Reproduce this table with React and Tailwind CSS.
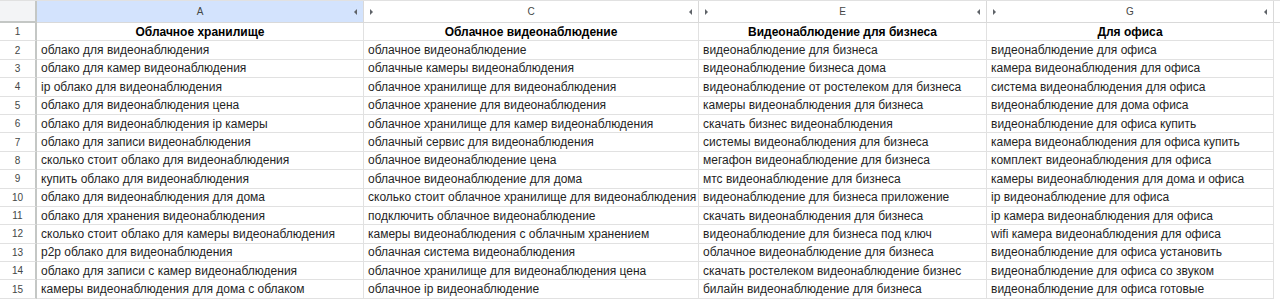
const headers = ["Облачное хранилище", "Облачное видеонаблюдение", "Видеонаблюдение для бизнеса", "Для офиса"];

const rows = [
  ["облако для видеонаблюдения", "облачное видеонаблюдение", "видеонаблюдение для бизнеса", "видеонаблюдение для офиса"],
  ["облако для камер видеонаблюдения", "облачные камеры видеонаблюдения", "видеонаблюдение бизнеса дома", "камера видеонаблюдения для офиса"],
  ["ip облако для видеонаблюдения", "облачное хранилище для видеонаблюдения", "видеонаблюдение от ростелеком для бизнеса", "система видеонаблюдения для офиса"],
  ["облако для видеонаблюдения цена", "облачное хранение для видеонаблюдения", "камеры видеонаблюдения для бизнеса", "видеонаблюдение для дома офиса"],
  ["облако для видеонаблюдения ip камеры", "облачное хранилище для камер видеонаблюдения", "скачать бизнес видеонаблюдения", "видеонаблюдение для офиса купить"],
  ["облако для записи видеонаблюдения", "облачный сервис для видеонаблюдения", "системы видеонаблюдения для бизнеса", "камера видеонаблюдения для офиса купить"],
  ["сколько стоит облако для видеонаблюдения", "облачное видеонаблюдение цена", "мегафон видеонаблюдение для бизнеса", "комплект видеонаблюдения для офиса"],
  ["купить облако для видеонаблюдения", "облачное видеонаблюдение для дома", "мтс видеонаблюдение для бизнеса", "камеры видеонаблюдения для дома и офиса"],
  ["облако для видеонаблюдения для дома", "сколько стоит облачное хранилище для видеонаблюдения", "видеонаблюдение для бизнеса приложение", "ip видеонаблюдение для офиса"],
  ["облако для хранения видеонаблюдения", "подключить облачное видеонаблюдение", "скачать видеонаблюдения для бизнеса", "ip камера видеонаблюдения для офиса"],
  ["сколько стоит облако для камеры видеонаблюдения", "камеры видеонаблюдения с облачным хранением", "видеонаблюдение для бизнеса под ключ", "wifi камера видеонаблюдения для офиса"],
  ["p2p облако для видеонаблюдения", "облачная система видеонаблюдения", "облачное видеонаблюдение для бизнеса", "видеонаблюдение для офиса установить"],
  ["облако для записи с камер видеонаблюдения", "облачное хранилище для видеонаблюдения цена", "скачать ростелеком видеонаблюдение бизнес", "видеонаблюдение для офиса со звуком"],
  ["камеры видеонаблюдения для дома с облаком", "облачное ip видеонаблюдение", "билайн видеонаблюдение для бизнеса", "видеонаблюдение для офиса готовые"],
];

const cols = ["A", "C", "E", "G"];
const widths = ["w-[327px]", "w-[335px]", "w-[288px]", "w-[287px]"];

function ArrowLeft() {
  return <span className="w-0 h-0 border-y-[3px] border-y-transparent border-r-[3px] border-r-[#5f6368]" />;
}

function ArrowRight() {
  return <span className="w-0 h-0 border-y-[3px] border-y-transparent border-l-[3px] border-l-[#5f6368]" />;
}

export default function App() {
  return (
    <div className="w-[1280px] h-[300px] overflow-hidden bg-white text-[12px] text-[#1f1f1f]" style={{ fontFamily: '"Liberation Sans", Arial, sans-serif' }}>
      {/* column headers */}
      <div className="flex h-[23px] border-t border-[#e1e1e1]">
        <div className="w-[37px] shrink-0 bg-[#f3f4f6] border-r-2 border-b-2 border-[#c4c7c5]" />
        {cols.map((c, i) => (
          <div
            key={c}
            className={`${widths[i]} shrink-0 relative flex items-center justify-center text-[10px] text-[#444746] border-r border-b border-[#d9d9d9] ${i === 0 ? "bg-[#d3e3fd]" : "bg-white"}`}
          >
            {c}
            {i > 0 && (
              <span className="absolute left-[6px] top-1/2 -translate-y-1/2 flex">
                <ArrowRight />
              </span>
            )}
            <span className="absolute right-[6px] top-1/2 -translate-y-1/2 flex">
              <ArrowLeft />
            </span>
          </div>
        ))}
        <div className="flex-1 border-b border-[#d9d9d9]" />
      </div>

      {/* header row */}
      <div className="flex h-[18.4px]">
        <div className="w-[37px] shrink-0 flex items-center justify-center text-[10px] text-[#444746] border-r-2 border-b border-r-[#c4c7c5] border-b-[#e1e1e1]">1</div>
        {headers.map((h, i) => (
          <div key={i} className={`${widths[i]} shrink-0 flex items-center justify-center font-bold border-r border-b border-[#e1e1e1] text-black`}>
            {h}
          </div>
        ))}
        <div className="flex-1" />
      </div>

      {rows.map((r, ri) => (
        <div key={ri} className="flex h-[18.4px]">
          <div className="w-[37px] shrink-0 flex items-center justify-center text-[10px] text-[#444746] border-r-2 border-b border-r-[#c4c7c5] border-b-[#e1e1e1]">
            {ri + 2}
          </div>
          {r.map((t, i) => (
            <div key={i} className={`${widths[i]} shrink-0 flex items-center px-[4px] whitespace-nowrap overflow-hidden border-r border-b border-[#e1e1e1]`}>
              {t}
            </div>
          ))}
          <div className="flex-1" />
        </div>
      ))}
    </div>
  );
}
